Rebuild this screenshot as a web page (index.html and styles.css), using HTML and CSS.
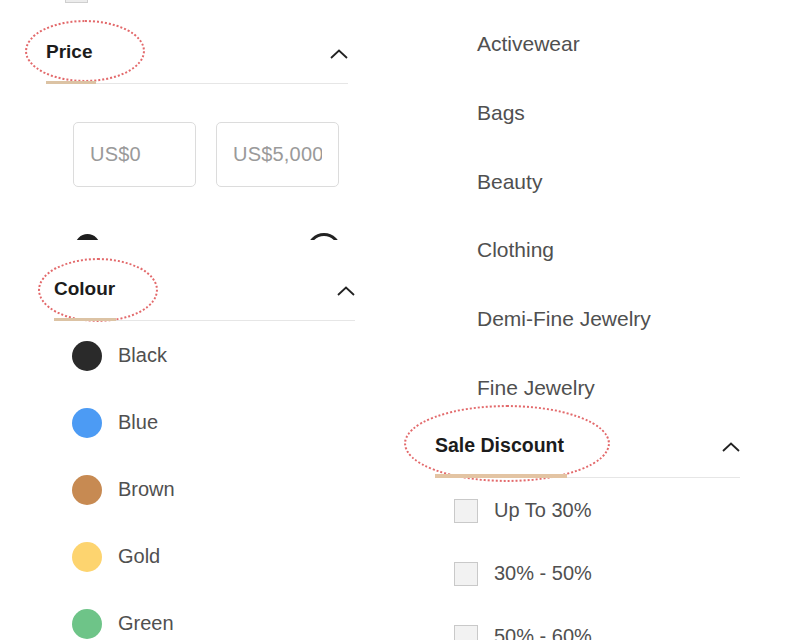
FILE: index.html
```html
<!DOCTYPE html>
<html lang="en">
<head>
<meta charset="utf-8">
<title>Filters</title>
<link rel="stylesheet" href="styles.css">
</head>
<body>
<main class="board">
  <div class="col col-left">
    <section class="panel panel-price">
      <div class="peek"><span class="peek-box"></span></div>
      <div class="facet-head head-price">
        <span class="ring ring-price"></span>
        <h2 class="facet-title">Price</h2>
        <svg class="chev" width="18" height="10" viewBox="0 0 18 10"><polyline points="1,9 9,1.5 17,9" fill="none" stroke="#222" stroke-width="1.8"/></svg>
      </div>
      <div class="range-inputs">
        <input class="range-field" type="text" placeholder="US$0">
        <input class="range-field" type="text" placeholder="US$5,000">
      </div>
      <div class="slider">
        <span class="knob knob-min"></span>
        <span class="knob knob-max"></span>
      </div>
    </section>

    <section class="panel panel-colour">
      <div class="facet-head head-colour">
        <span class="ring ring-colour"></span>
        <h2 class="facet-title">Colour</h2>
        <svg class="chev" width="18" height="10" viewBox="0 0 18 10"><polyline points="1,9 9,1.5 17,9" fill="none" stroke="#222" stroke-width="1.8"/></svg>
      </div>
      <ul class="swatch-list">
        <li class="swatch-row"><span class="dot dot-black"></span>Black</li>
        <li class="swatch-row"><span class="dot dot-blue"></span>Blue</li>
        <li class="swatch-row"><span class="dot dot-brown"></span>Brown</li>
        <li class="swatch-row"><span class="dot dot-gold"></span>Gold</li>
        <li class="swatch-row"><span class="dot dot-green"></span>Green</li>
      </ul>
    </section>
  </div>

  <div class="col col-right">
    <section class="panel panel-cats">
      <ul class="cat-list">
        <li class="cat-row">Activewear</li>
        <li class="cat-row">Bags</li>
        <li class="cat-row">Beauty</li>
        <li class="cat-row">Clothing</li>
        <li class="cat-row">Demi-Fine Jewelry</li>
        <li class="cat-row">Fine Jewelry</li>
      </ul>
    </section>

    <section class="panel panel-sale">
      <div class="facet-head head-sale">
        <span class="ring ring-sale"></span>
        <h2 class="facet-title">Sale Discount</h2>
        <svg class="chev" width="18" height="10" viewBox="0 0 18 10"><polyline points="1,9 9,1.5 17,9" fill="none" stroke="#222" stroke-width="1.8"/></svg>
      </div>
      <ul class="check-list">
        <li class="check-row"><span class="box"></span>Up To 30%</li>
        <li class="check-row"><span class="box"></span>30% - 50%</li>
        <li class="check-row"><span class="box"></span>50% - 60%</li>
      </ul>
    </section>
  </div>
</main>
</body>
</html>
```

FILE: styles.css
```css
* { box-sizing: border-box; }

html, body {
  margin: 0;
  padding: 0;
  background: #ffffff;
}

body {
  font-family: "Liberation Sans", Arial, sans-serif;
  color: #505050;
  width: 800px;
  height: 640px;
  overflow: hidden;
}

.board {
  display: grid;
  grid-template-columns: 400px 400px;
  height: 640px;
}

.col {
  display: flex;
  flex-direction: column;
}

.panel {
  overflow: hidden;
  flex: none;
}

ul {
  list-style: none;
  margin: 0;
  padding: 0;
}

/* ---------- headings ---------- */
.facet-head {
  position: relative;
  display: flex;
  justify-content: space-between;
  align-items: flex-start;
  padding: 9px 0 19px;
  border-bottom: 1px solid #e6e6e6;
}

.facet-head::after {
  content: "";
  position: absolute;
  left: 0;
  bottom: -1px;
  height: 3px;
  background: #dcc3a4;
}

.facet-title {
  margin: 0;
  font-size: 19px;
  line-height: 24px;
  font-weight: 700;
  color: #1c1c1c;
}

.chev {
  display: block;
  margin-top: 9px;
}

.ring {
  position: absolute;
  border: 2px dotted #e0595b;
  border-radius: 50%;
  pointer-events: none;
  opacity: 0.9;
}

/* ---------- price ---------- */
.panel-price {
  height: 240px;
}

.peek {
  height: 3px;
  overflow: hidden;
  padding-left: 65px;
}

.peek-box {
  display: block;
  width: 23px;
  height: 23px;
  margin-top: -20px;
  background: #ececec;
  border: 1px solid #cfcfcf;
}

.head-price {
  margin: 28px 0 0 46px;
  width: 302px;
}
.head-price::after { width: 50px; }

.ring-price {
  left: -21px;
  top: -11px;
  width: 120px;
  height: 62px;
}

.range-inputs {
  display: flex;
  gap: 20px;
  margin: 38px 0 0 73px;
}

.range-field {
  width: 123px;
  height: 65px;
  border: 1px solid #dcdcdc;
  border-radius: 5px;
  padding: 0 16px 0 16px;
  font-family: "Liberation Sans", Arial, sans-serif;
  font-size: 20px;
  letter-spacing: 0.2px;
  color: #999;
  background: #fff;
  outline: none;
}
.range-field::placeholder { color: #9a9a9a; }

.slider {
  display: flex;
  justify-content: space-between;
  align-items: flex-start;
  margin: 46px 0 0 75px;
  width: 266px;
}

.knob {
  display: block;
  border-radius: 50%;
}
.knob-min {
  width: 25px;
  height: 25px;
  margin-top: 1px;
  background: #1e1e1e;
}
.knob-max {
  width: 34px;
  height: 34px;
  background: #fff;
  border: 3px solid #222;
}

/* ---------- colour ---------- */
.panel-colour {
  height: 400px;
}

.head-colour {
  margin: 28px 0 0 54px;
  width: 301px;
}
.head-colour::after { width: 62px; }

.ring-colour {
  left: -16px;
  top: -10px;
  width: 120px;
  height: 64px;
}

.swatch-list {
  padding: 1px 0 0 72px;
}

.swatch-row {
  display: flex;
  align-items: center;
  gap: 16px;
  height: 67px;
  font-size: 20px;
  color: #505050;
}

.dot {
  width: 30px;
  height: 30px;
  border-radius: 50%;
  flex: none;
}
.dot-black { background: #2a2a2a; }
.dot-blue  { background: #4c9bf4; }
.dot-brown { background: #c78a52; }
.dot-gold  { background: #fdd46f; }
.dot-green { background: #6ec488; }

/* ---------- categories ---------- */
.panel-cats {
  height: 400px;
}

.cat-list {
  padding: 10px 0 0 77px;
}

.cat-row {
  height: 68.8px;
  line-height: 68.8px;
  font-size: 21px;
  color: #505050;
}

/* ---------- sale ---------- */
.panel-sale {
  height: 240px;
}

.head-sale {
  margin: 24px 0 0 35px;
  width: 305px;
  padding-bottom: 20px;
}
.head-sale .facet-title { font-size: 19.5px; }
.head-sale::after {
  width: 132px;
  height: 4px;
  background: #e3c4a3;
}

.ring-sale {
  left: -31px;
  top: -19px;
  width: 206px;
  height: 77px;
}

.check-list {
  padding: 1px 0 0 54px;
}

.check-row {
  display: flex;
  align-items: center;
  gap: 16px;
  height: 63px;
  font-size: 20px;
  color: #505050;
}

.box {
  width: 24px;
  height: 24px;
  flex: none;
  background: #f2f2f2;
  border: 1px solid #c9c9c9;
}
```
